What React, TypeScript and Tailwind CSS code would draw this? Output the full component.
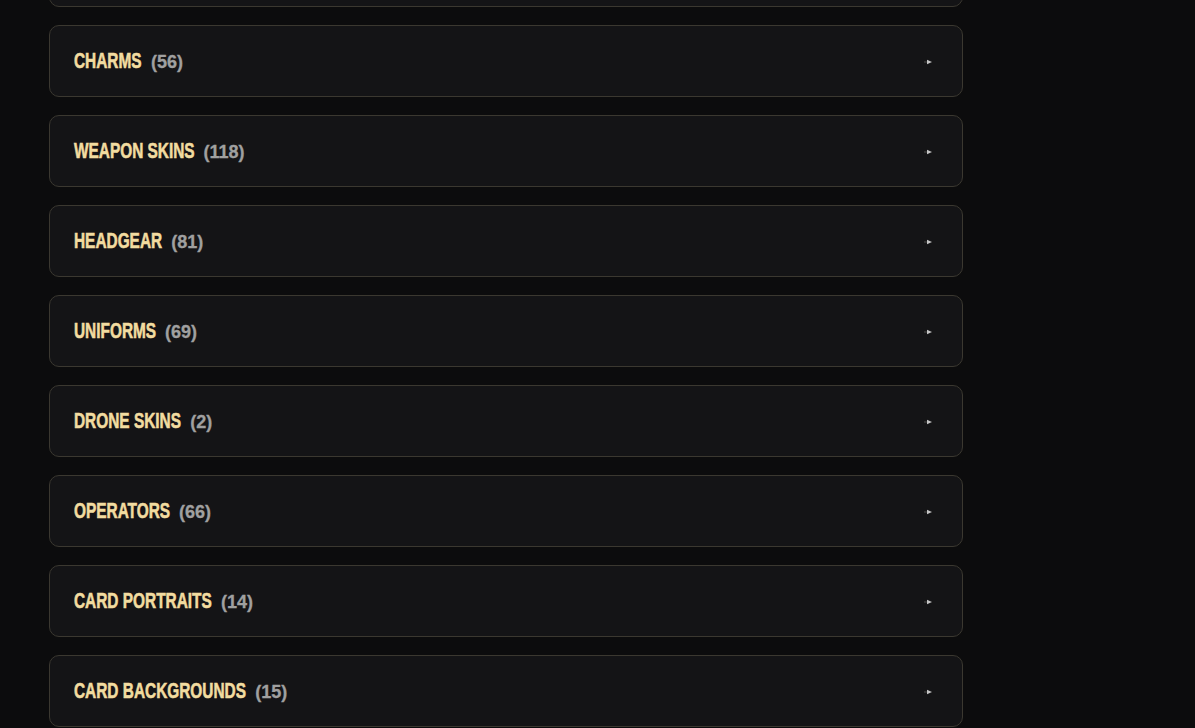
import React from "react";

const items: [string, number][] = [
  ["SKINS", 0],
  ["CHARMS", 56],
  ["WEAPON SKINS", 118],
  ["HEADGEAR", 81],
  ["UNIFORMS", 69],
  ["DRONE SKINS", 2],
  ["OPERATORS", 66],
  ["CARD PORTRAITS", 14],
  ["CARD BACKGROUNDS", 15],
];

export default function App() {
  return (
    <div className="h-[728px] w-[1195px] overflow-hidden bg-[#0c0c0d]">
      <div className="mt-[-65px] flex w-[914px] ml-[49px] flex-col gap-[18px]">
        {items.map(([name, n], i) => (
          <div
            key={i}
            className="flex h-[72px] items-center justify-between rounded-[10px] border border-[#3b3830] bg-[#141416] pl-[24px] pr-[30px]"
          >
            <div
              className="flex items-baseline whitespace-nowrap font-bold origin-left scale-x-[0.7] pt-[2px]"
              style={{ fontFamily: '"Liberation Sans", Arial, sans-serif' }}
            >
              {i > 0 && (
                <>
                  <span className="text-[22px] leading-[26px] text-[#f2dca0] [-webkit-text-stroke:0.6px_#f2dca0]">
                    {name}
                  </span>
                  <span className="ml-[13px] inline-block origin-left scale-x-[1.4286] text-[18px] text-[#a0a0a0] [-webkit-text-stroke:0.3px_#a0a0a0]">
                    ({n})
                  </span>
                </>
              )}
            </div>
            <svg width="8" height="6" viewBox="0 0 8 6" className="mt-[2px]">
              <rect x="0" y="2" width="3" height="2" fill="#2e2e2e" />
              <path d="M3 0.8 L8 3 L3 5.2 Z" fill="#c4c4c4" />
            </svg>
          </div>
        ))}
      </div>
    </div>
  );
}
